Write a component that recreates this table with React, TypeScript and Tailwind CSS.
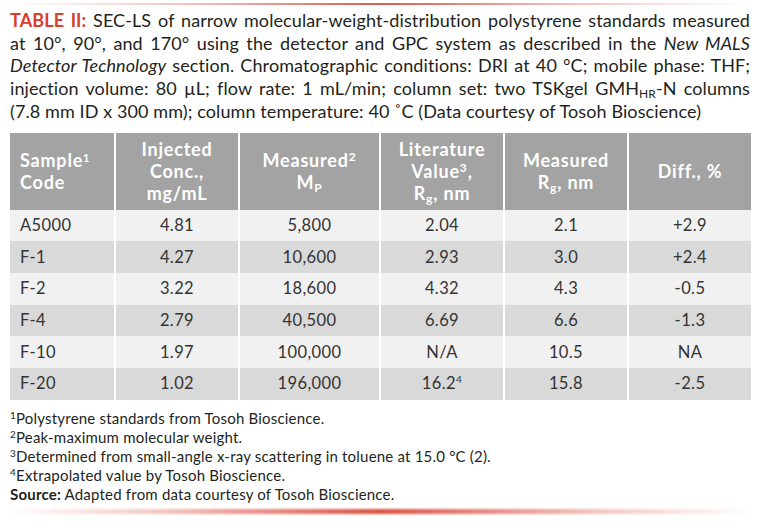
import React from "react";

const rows = [
  ["A5000", "4.81", "5,800", "2.04", "2.1", "+2.9"],
  ["F-1", "4.27", "10,600", "2.93", "3.0", "+2.4"],
  ["F-2", "3.22", "18,600", "4.32", "4.3", "-0.5"],
  ["F-4", "2.79", "40,500", "6.69", "6.6", "-1.3"],
  ["F-10", "1.97", "100,000", "N/A", "10.5", "NA"],
  ["F-20", "1.02", "196,000", "16.2", "15.8", "-2.5"],
];

const font = { fontFamily: "Lato, 'Open Sans', sans-serif" };

const head = "h-[77px] bg-[#a3a3a3] text-white font-bold text-[18px] tracking-[0.8px] leading-[22px] flex items-center";

export default function App() {
  return (
    <div className="w-[760px] h-[528px] bg-white relative overflow-hidden text-[#231f20]" style={font}>
      <div className="mx-[10px] mt-[3px] h-[2px] bg-[linear-gradient(90deg,rgba(217,72,58,0)_0%,rgba(217,72,58,0.35)_25%,rgba(217,72,58,0.9)_50%,rgba(217,72,58,0.35)_75%,rgba(217,72,58,0)_100%)]" />
      <p className="mx-[10px] mt-[4px] text-[18px] tracking-[0.1px] leading-[22.7px] text-justify">
        <span className="font-bold text-[#d6402d]">TABLE II:</span> SEC-LS of narrow molecular-weight-distribution polystyrene standards measured at 10°, 90°, and 170° using the detector and GPC system as described in the <i>New MALS Detector Technology</i> section. Chromatographic conditions: DRI at 40 °C; mobile phase: THF; injection volume: 80 µL; flow rate: 1 mL/min; column set: two TSKgel GMH<sub className="text-[12px]">HR</sub>-N columns (7.8 mm ID x 300 mm); column temperature: 40 ˚C (Data courtesy of Tosoh Bioscience)
      </p>
      <div className="mx-[10px] mt-[10px] w-[741px] grid grid-cols-[106px_124px_141px_124px_124px_122px]">
        <div className={`${head} border-r-2 border-white pl-[10px]`}>
          <div>Sample<sup className="text-[11px]">1</sup><br />Code</div>
        </div>
        <div className={`${head} border-r-2 border-white justify-center text-center`}>
          <div>Injected<br />Conc.,<br />mg/mL</div>
        </div>
        <div className={`${head} border-r-2 border-white justify-center text-center`}>
          <div>Measured<sup className="text-[12px]">2</sup><br />M<sub className="text-[12px]">P</sub></div>
        </div>
        <div className={`${head} border-r-2 border-white justify-center text-center`}>
          <div>Literature<br />Value<sup className="text-[12px]">3</sup>,<br />R<sub className="text-[12px]">g</sub>, nm</div>
        </div>
        <div className={`${head} border-r-2 border-white justify-center text-center`}>
          <div>Measured<br />R<sub className="text-[12px]">g</sub>, nm</div>
        </div>
        <div className={`${head} justify-center text-center`}>
          <div>Diff., %</div>
        </div>
        {rows.map((r, i) => {
          const bg = i % 2 === 0 ? "bg-[#f1f1f1]" : "bg-[#d9d9d9]";
          return (
            <React.Fragment key={i}>
              {r.map((c, j) => (
                <div
                  key={j}
                  className={`h-[31.7px] ${bg} ${j < 5 ? "border-r-2 border-white" : ""} ${j === 0 ? "pl-[10px] justify-start" : "justify-center"} flex items-center text-[16.5px] tracking-[0.4px] text-[#333333]`}
                >
                  {c}
                  {i === 5 && j === 3 ? <sup className="text-[10px]">4</sup> : null}
                </div>
              ))}
            </React.Fragment>
          );
        })}
      </div>
      <div className="mx-[10px] mt-[9px] text-[15px] tracking-[0.2px] leading-[19.2px] text-[#231f20]">
        <div><sup className="text-[10px]">1</sup>Polystyrene standards from Tosoh Bioscience.</div>
        <div><sup className="text-[10px]">2</sup>Peak-maximum molecular weight.</div>
        <div><sup className="text-[10px]">3</sup>Determined from small-angle x-ray scattering in toluene at 15.0 °C (2).</div>
        <div><sup className="text-[10px]">4</sup>Extrapolated value by Tosoh Bioscience.</div>
        <div><span className="font-bold">Source:</span> Adapted from data courtesy of Tosoh Bioscience.</div>
      </div>
      <div className="mx-[8px] mt-[4px] h-[5px] blur-[1px] bg-[linear-gradient(90deg,rgba(217,72,58,0)_0%,rgba(217,72,58,0.3)_20%,rgba(217,72,58,0.95)_50%,rgba(217,72,58,0.3)_80%,rgba(217,72,58,0)_100%)]" />
    </div>
  );
}
